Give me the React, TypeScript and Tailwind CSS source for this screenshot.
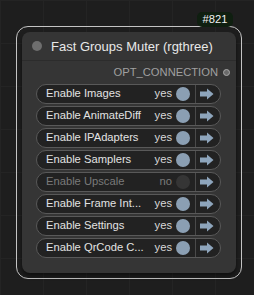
import React from "react";

type Row = { label: string; on: boolean };

const rows: Row[] = [
  { label: "Enable Images", on: true },
  { label: "Enable AnimateDiff", on: true },
  { label: "Enable IPAdapters", on: true },
  { label: "Enable Samplers", on: true },
  { label: "Enable Upscale", on: false },
  { label: "Enable Frame Int...", on: true },
  { label: "Enable Settings", on: true },
  { label: "Enable QrCode C...", on: true },
];

function Arrow() {
  return (
    <svg width="14" height="12" viewBox="0 0 14 12">
      <path d="M0 3.5H7V0.5L13.5 6L7 11.5V8.5H0Z" fill="#8ea5bc" />
    </svg>
  );
}

function ToggleRow({ label, on }: Row) {
  return (
    <div className="flex h-[20px] w-[185px] items-center rounded-full border border-[#595959] bg-[#222222]">
      <div
        className={`ml-[9px] min-w-0 flex-1 whitespace-nowrap text-[11.2px] leading-none ${
          on ? "text-[#e2e2e2]" : "text-[#7a7a7a]"
        }`}
      >
        {label}
      </div>
      <div
        className={`shrink-0 text-[11.2px] leading-none ${on ? "text-[#d8d8d8]" : "text-[#7a7a7a]"}`}
      >
        {on ? "yes" : "no"}
      </div>
      <div
        className={`ml-[4px] h-[14px] w-[14px] shrink-0 rounded-full ${on ? "bg-[#8b9fb3]" : "bg-[#353535]"}`}
      />
      <div className="ml-[5px] h-full w-px shrink-0 bg-[#4a4a4a]" />
      <div className="flex w-[24px] shrink-0 items-center justify-center pr-[3px]">
        <Arrow />
      </div>
    </div>
  );
}

export default function App() {
  return (
    <div
      className="relative h-[295px] w-[254px] overflow-hidden bg-[#1e1e1e] bg-[linear-gradient(#242424_1px,transparent_1px),linear-gradient(90deg,#242424_1px,transparent_1px)] bg-[size:43px_43px] pl-[16px] pt-[26px]"
      style={{ fontFamily: '"Liberation Sans", Arial, sans-serif' }}
    >
      <div className="h-[253px] w-[226px] rounded-[12px] border border-[#c4c4c4] p-[5px]">
        <div className="flex h-[241px] w-[214px] flex-col rounded-[8px] bg-[#353535] shadow-[0_3px_4px_rgba(0,0,0,0.5)]">
          <div className="flex h-[29px] items-center border-b border-[#2c2c2c] pl-[10px]">
            <div className="h-[10px] w-[10px] rounded-full bg-[#6e6e6e]" />
            <div className="ml-[9px] whitespace-nowrap text-[13px] leading-none text-[#e8e8e8]">
              Fast Groups Muter (rgthree)
            </div>
          </div>
          <div className="flex h-[23px] items-center justify-end pr-[6px]">
            <div className="text-[11.2px] leading-none text-[#a0a0a0]">OPT_CONNECTION</div>
            <div className="ml-[5px] h-[7px] w-[7px] rounded-full border border-[#a8a8a8] bg-[#6a6a6a]" />
          </div>
          <div className="flex flex-col gap-[2px] pl-[14px]">
            {rows.map((r) => (
              <ToggleRow key={r.label} {...r} />
            ))}
          </div>
        </div>
      </div>
      <div className="absolute left-[197px] top-[12px] flex h-[15px] w-[36px] items-center justify-center rounded-[5px] bg-[#0f1f10] text-[11.2px] leading-none text-[#f0f0f0]">
        #821
      </div>
    </div>
  );
}
